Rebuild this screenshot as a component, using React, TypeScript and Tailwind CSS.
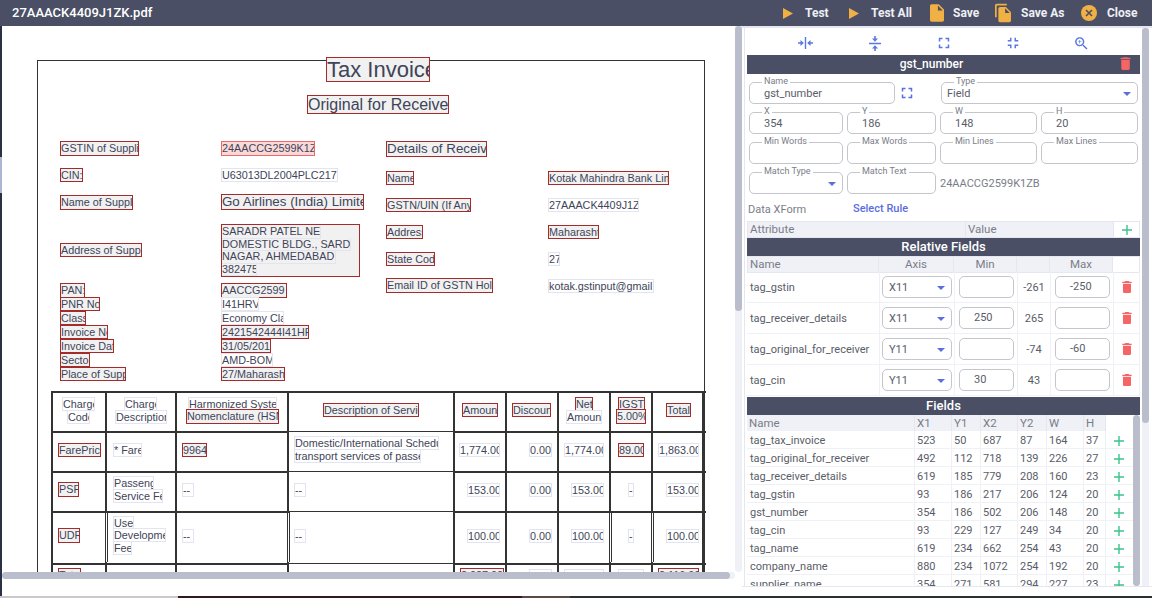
import type { ReactNode } from "react";

type Tag = {
  x: number;
  y: number;
  w: number;
  h: number;
  text: string;
  size?: number;
  kind?: "tag" | "plain" | "hit";
  center?: boolean;
};

const tags: Tag[] = [
  { x: 326, y: 57, w: 104, h: 25, text: "Tax Invoice", size: 22 },
  { x: 307, y: 95, w: 142, h: 19, text: "Original for Receiver", size: 16 },
  { x: 60, y: 141, w: 79, h: 15, text: "GSTIN of Supplier" },
  { x: 221, y: 141, w: 94, h: 15, text: "24AACCG2599K1ZB", kind: "hit" },
  { x: 60, y: 168, w: 23, h: 14, text: "CIN:" },
  { x: 221, y: 168, w: 117, h: 14, text: "U63013DL2004PLC217", kind: "plain" },
  { x: 60, y: 195, w: 73, h: 15, text: "Name of Supplier" },
  { x: 221, y: 194, w: 143, h: 16, text: "Go Airlines (India) Limited", size: 13.33 },
  { x: 60, y: 243, w: 82, h: 14, text: "Address of Supplier" },
  { x: 60, y: 283, w: 25, h: 15, text: "PAN:" },
  { x: 221, y: 283, w: 66, h: 15, text: "AACCG2599" },
  { x: 60, y: 297, w: 40, h: 14, text: "PNR No" },
  { x: 221, y: 297, w: 38, h: 14, text: "I41HRV", kind: "plain" },
  { x: 60, y: 311, w: 26, h: 14, text: "Class" },
  { x: 221, y: 311, w: 63, h: 14, text: "Economy Class", kind: "plain" },
  { x: 60, y: 325, w: 48, h: 14, text: "Invoice No" },
  { x: 221, y: 325, w: 88, h: 14, text: "2421542444I41HRV" },
  { x: 60, y: 339, w: 54, h: 14, text: "Invoice Date" },
  { x: 221, y: 339, w: 50, h: 14, text: "31/05/2019" },
  { x: 60, y: 353, w: 30, h: 14, text: "Sector" },
  { x: 221, y: 353, w: 52, h: 14, text: "AMD-BOM", kind: "plain" },
  { x: 60, y: 367, w: 66, h: 14, text: "Place of Supply" },
  { x: 221, y: 367, w: 64, h: 14, text: "27/Maharashtra" },
  { x: 386, y: 141, w: 101, h: 16, text: "Details of Receiver", size: 13.33 },
  { x: 386, y: 171, w: 28, h: 14, text: "Name" },
  { x: 386, y: 198, w: 85, h: 14, text: "GSTN/UIN (If Any)" },
  { x: 386, y: 225, w: 37, h: 14, text: "Address" },
  { x: 386, y: 252, w: 49, h: 14, text: "State Code" },
  { x: 386, y: 278, w: 107, h: 15, text: "Email ID of GSTN Holder" },
  { x: 548, y: 171, w: 121, h: 14, text: "Kotak Mahindra Bank Limited" },
  { x: 548, y: 198, w: 91, h: 14, text: "27AAACK4409J1ZK", kind: "plain" },
  { x: 548, y: 225, w: 51, h: 14, text: "Maharashtra" },
  { x: 548, y: 252, w: 12, h: 14, text: "27", kind: "plain" },
  { x: 548, y: 279, w: 106, h: 14, text: "kotak.gstinput@gmail.com", kind: "plain" },
  { x: 62, y: 397, w: 33, h: 14, text: "Charge", kind: "plain", center: true },
  { x: 67, y: 410, w: 23, h: 14, text: "Code", kind: "plain", center: true },
  { x: 124, y: 397, w: 33, h: 14, text: "Charge", kind: "plain", center: true },
  { x: 115, y: 410, w: 52, h: 14, text: "Description", kind: "plain", center: true },
  { x: 188, y: 397, w: 89, h: 14, text: "Harmonized System", kind: "plain", center: true },
  { x: 186, y: 409, w: 93, h: 15, text: "Nomenclature (HSN)" },
  { x: 323, y: 403, w: 96, h: 14, text: "Description of Service" },
  { x: 462, y: 403, w: 36, h: 14, text: "Amount" },
  { x: 512, y: 403, w: 39, h: 14, text: "Discount" },
  { x: 575, y: 397, w: 18, h: 14, text: "Net" },
  { x: 566, y: 410, w: 36, h: 14, text: "Amount", kind: "plain" },
  { x: 618, y: 397, w: 27, h: 14, text: "IGST" },
  { x: 616, y: 409, w: 30, h: 15, text: "5.00%" },
  { x: 666, y: 403, w: 25, h: 14, text: "Total" },
  { x: 58, y: 443, w: 43, h: 14, text: "FarePrice" },
  { x: 113, y: 443, w: 29, h: 14, text: "* Fare", kind: "plain" },
  { x: 182, y: 443, w: 25, h: 14, text: "9964" },
  { x: 294, y: 436, w: 145, h: 14, text: "Domestic/International Scheduled", kind: "plain" },
  { x: 294, y: 449, w: 127, h: 14, text: "transport services of passengers", kind: "plain" },
  { x: 459, y: 443, w: 41, h: 14, text: "1,774.00", kind: "plain" },
  { x: 529, y: 443, w: 23, h: 14, text: "0.00", kind: "plain" },
  { x: 564, y: 443, w: 40, h: 14, text: "1,774.00", kind: "plain" },
  { x: 618, y: 443, w: 26, h: 14, text: "89.00" },
  { x: 658, y: 443, w: 41, h: 14, text: "1,863.00", kind: "plain" },
  { x: 58, y: 482, w: 21, h: 15, text: "PSF" },
  { x: 113, y: 476, w: 41, h: 14, text: "Passenger", kind: "plain" },
  { x: 113, y: 489, w: 50, h: 14, text: "Service Fee", kind: "plain" },
  { x: 182, y: 483, w: 12, h: 14, text: "--", kind: "plain" },
  { x: 294, y: 483, w: 12, h: 14, text: "--", kind: "plain" },
  { x: 467, y: 483, w: 33, h: 14, text: "153.00", kind: "plain" },
  { x: 529, y: 483, w: 23, h: 14, text: "0.00", kind: "plain" },
  { x: 571, y: 483, w: 33, h: 14, text: "153.00", kind: "plain" },
  { x: 628, y: 483, w: 6, h: 14, text: "-", kind: "plain" },
  { x: 666, y: 483, w: 33, h: 14, text: "153.00", kind: "plain" },
  { x: 58, y: 528, w: 22, h: 15, text: "UDF" },
  { x: 113, y: 516, w: 21, h: 14, text: "Use", kind: "plain" },
  { x: 113, y: 528, w: 53, h: 14, text: "Development", kind: "plain" },
  { x: 113, y: 541, w: 19, h: 14, text: "Fee", kind: "plain" },
  { x: 182, y: 529, w: 12, h: 14, text: "--", kind: "plain" },
  { x: 294, y: 529, w: 12, h: 14, text: "--", kind: "plain" },
  { x: 467, y: 529, w: 33, h: 14, text: "100.00", kind: "plain" },
  { x: 529, y: 529, w: 23, h: 14, text: "0.00", kind: "plain" },
  { x: 571, y: 529, w: 33, h: 14, text: "100.00", kind: "plain" },
  { x: 628, y: 529, w: 6, h: 14, text: "-", kind: "plain" },
  { x: 666, y: 529, w: 33, h: 14, text: "100.00", kind: "plain" },
  { x: 58, y: 568, w: 23, h: 15, text: "Total" },
  { x: 460, y: 568, w: 44, h: 15, text: "2,027.00" },
  { x: 529, y: 569, w: 23, h: 14, text: "0.00", kind: "plain" },
  { x: 564, y: 569, w: 40, h: 14, text: "2,027.00", kind: "plain" },
  { x: 618, y: 569, w: 26, h: 14, text: "89.00", kind: "plain" },
  { x: 658, y: 568, w: 41, h: 15, text: "2,116.00" },
];

const addressLines = [
  { w: 99, text: "SARADR PATEL NEW" },
  { w: 129, text: "DOMESTIC BLDG., SARDAR" },
  { w: 114, text: "NAGAR, AHMEDABAD" },
  { w: 35, text: "382475" },
];

const vLines = [
  { x: 51, split: false },
  { x: 105, split: true },
  { x: 175, split: false },
  { x: 287, split: true },
  { x: 453, split: false },
  { x: 505, split: false },
  { x: 557, split: false },
  { x: 609, split: true },
  { x: 651, split: true },
  { x: 702, split: false },
];
const hLines = [430, 470, 510, 562];

const relativeRows = [
  { name: "tag_gstin", axis: "X11", min: "", calc: "-261", max: "-250" },
  { name: "tag_receiver_details", axis: "X11", min: "250", calc: "265", max: "" },
  { name: "tag_original_for_receiver", axis: "Y11", min: "", calc: "-74", max: "-60" },
  { name: "tag_cin", axis: "Y11", min: "30", calc: "43", max: "" },
];

const fieldRows = [
  ["tag_tax_invoice", "523", "50", "687", "87", "164", "37"],
  ["tag_original_for_receiver", "492", "112", "718", "139", "226", "27"],
  ["tag_receiver_details", "619", "185", "779", "208", "160", "23"],
  ["tag_gstin", "93", "186", "217", "206", "124", "20"],
  ["gst_number", "354", "186", "502", "206", "148", "20"],
  ["tag_cin", "93", "229", "127", "249", "34", "20"],
  ["tag_name", "619", "234", "662", "254", "43", "20"],
  ["company_name", "880", "234", "1072", "254", "192", "20"],
  ["supplier_name", "354", "271", "581", "294", "227", "23"],
];

function Icon({ d, className, viewBox }: { d: string; className: string; viewBox?: string }) {
  return (
    <svg viewBox={viewBox ?? "0 0 24 24"} fill="currentColor" className={className}>
      <path d={d} />
    </svg>
  );
}

const TRASH = "M6 19c0 1.1.9 2 2 2h8c1.100 0 2-.9 2-2V7H6v12zM19 4h-3.500l-1-1h-5l-1 1H5v2h14V4z";
const EXPAND = "M7 14H5v5h5v-2H7v-3zm-2-4h2V7h3V5H5v5zm12 7h-3v2h5v-5h-2v3zM14 5v2h3v3h2V5h-5z";
const SHRINK = "M5 16h3v3h2v-5H5v2zm3-8H5v2h5V5H8v3zm6 11h2v-3h3v-2h-5v5zm2-11V5h-2v5h5V8h-3z";
const ZOOM =
  "M15.500 14h-.79l-.28-.27C15.410 12.590 16 11.110 16 9.500 16 5.910 13.090 3 9.500 3S3 5.910 3 9.500 5.910 16 9.500 16c1.610 0 3.090-.59 4.230-1.570l.27.28v.79l5 4.990L20.490 19l-4.990-5zm-6 0C7.010 14 5 11.990 5 9.500S7.010 5 9.500 5 14 7.010 14 9.500 11.990 14 9.500 14zM12 10h-2v2H9v-2H7V9h2V7h1v2h2v1z";
const FILE = "M6 2c-1.100 0-1.990.9-1.990 2L4 20c0 1.100.89 2 1.990 2H18c1.100 0 2-.9 2-2V8l-6-6H6zm7 7V3.500L18.500 9H13z";
const COPY =
  "M16 1H4c-1.100 0-2 .9-2 2v14h2V3h12V1zm-1 4l6 6v10c0 1.100-.9 2-2 2H7.990C6.890 23 6 22.100 6 21l.01-14c0-1.100.89-2 1.990-2h7zm-1 7h5.500L14 6.500V12z";

function PlayIcon() {
  return (
    <svg viewBox="0 0 10 11" className="h-[11px] w-[10px] text-[#f0b044]" fill="currentColor">
      <path d="M0 0l10 5.500L0 11z" />
    </svg>
  );
}

function HeaderButton({ icon, label, className }: { icon: ReactNode; label: string; className: string }) {
  return (
    <div className={`flex items-center ${className}`}>
      {icon}
      <span className="text-[12px] font-bold text-[#eef0f5]">{label}</span>
    </div>
  );
}

function Header() {
  return (
    <div className="flex h-[26px] items-center bg-[#4a4f65] pl-3">
      <span className="flex-1 text-[13px] font-medium text-white">27AAACK4409J1ZK.pdf</span>
      <HeaderButton className="w-[66px] gap-[12px]" icon={<PlayIcon />} label="Test" />
      <HeaderButton className="w-[81px] gap-[12px]" icon={<PlayIcon />} label="Test All" />
      <HeaderButton
        className="w-[65px] gap-[9px]"
        icon={<Icon d={FILE} viewBox="4 2 16 20" className="h-[18px] w-[14px] text-[#f0b044]" />}
        label="Save"
      />
      <HeaderButton
        className="w-[86px] gap-[10px]"
        icon={<Icon d={COPY} viewBox="2 1 19 22" className="h-[20px] w-[16px] text-[#f0b044]" />}
        label="Save As"
      />
      <HeaderButton
        className="w-[71px] gap-[10px]"
        icon={
          <svg viewBox="0 0 16 16" className="h-[16px] w-[16px]">
            <circle cx="8" cy="8" r="8" fill="#f0b044" />
            <path d="M5 5l6 6m0-6l-6 6" stroke="#4a4f65" strokeWidth="1.600" />
          </svg>
        }
        label="Close"
      />
    </div>
  );
}

function TagBox({ tag }: { tag: Tag }) {
  const kind = tag.kind ?? "tag";
  const skin =
    kind === "tag"
      ? "border-[#a52a2a] bg-[#f1f1f1]"
      : kind === "hit"
        ? "border-[#ee6a6a] bg-[#fbd9d9]"
        : "border-[#e2e5f0] bg-white";
  return (
    <div
      className={`absolute overflow-hidden whitespace-nowrap border-[1px] text-[#404458] ${skin} ${
        tag.center ? "text-center" : ""
      }`}
      style={{
        left: tag.x - 2,
        top: tag.y - 26,
        width: tag.w,
        height: tag.h,
        fontSize: tag.size ?? 10.8,
        lineHeight: `${tag.h - 2}px`,
      }}
    >
      {tag.text}
    </div>
  );
}

function InvoiceRules() {
  return (
    <>
      {vLines.map((line) => (
        <div
          key={line.x}
          className="absolute top-[365px] h-[190px] w-[2px] bg-[#333333]"
          style={{ left: line.x - 2 }}
        >
          {/* the UDF row draws these rules twice, leaving a hairline between them */}
          {line.split && (
            <div className="absolute left-0 top-[121px] h-[50px] w-[3px] border-x border-[#333333] bg-white" />
          )}
        </div>
      ))}
      <div className="absolute left-[49px] top-[365px] h-[2px] w-[655px] bg-[#333333]" />
      {hLines.map((y) => (
        <div key={y}>
          <div className="absolute left-[49px] h-[2px] w-[238px] bg-[#333333]" style={{ top: y - 26 + 1 }} />
          <div className="absolute left-[287px] h-px w-[165px] bg-[#333333]" style={{ top: y - 25 }} />
          <div className="absolute left-[451px] h-[2px] w-[253px] bg-[#333333]" style={{ top: y - 26 + 1 }} />
        </div>
      ))}
    </>
  );
}

function PdfPane() {
  return (
    <div className="relative h-[546px] w-[733px] overflow-hidden bg-white font-['Liberation_Sans',sans-serif]">
      <div className="absolute left-[35px] top-[34px] h-[600px] w-[668px] border border-[#333333]" />
      <InvoiceRules />
      {tags.map((tag) => (
        <TagBox key={`${tag.x}-${tag.y}`} tag={tag} />
      ))}
      {/* supplier address block */}
      <div className="absolute left-[219px] top-[198px] h-[53px] w-[139px] border border-[#a52a2a] bg-[#f1f1f1] pt-px text-[10.800px] leading-[11.500px] text-[#404458]">
        {addressLines.map((line) => (
          <div
            key={line.text}
            className="overflow-hidden whitespace-nowrap border-b border-r border-[#e2e5f0]"
            style={{ width: line.w }}
          >
            {line.text}
          </div>
        ))}
      </div>
    </div>
  );
}

function Caret() {
  return (
    <span className="absolute right-[6px] top-[9px] h-0 w-0 border-x-[4px] border-t-[4px] border-x-transparent border-t-[#5a6ee0]" />
  );
}

function Field({
  label,
  value,
  className,
  select,
}: {
  label: string;
  value?: string;
  className: string;
  select?: boolean;
}) {
  return (
    <div className={`relative h-[22px] shrink-0 rounded-[5px] border border-[#c4c6cc] ${className}`}>
      <span className="absolute left-[12px] top-[-7px] bg-white px-[2px] text-[9px] leading-[10px] text-[#7a7d88]">
        {label}
      </span>
      {value && (
        <span className={`block text-[11px] leading-[21px] text-[#5a5d68] ${select ? "pl-[5px]" : "pl-[14px]"}`}>
          {value}
        </span>
      )}
      {select && <Caret />}
    </div>
  );
}

function SectionBar({ title, size, trash }: { title: string; size: string; trash?: boolean }) {
  return (
    <div
      className={`relative flex items-center justify-center bg-[#4a4f65] font-medium text-white ${size} ${
        trash ? "h-[19px] pb-[2px] pr-[24px]" : "h-[18px]"
      }`}
    >
      {title}
      {trash && <Icon d={TRASH} className="absolute right-[6px] h-[17px] w-[17px] text-[#f56565]" />}
    </div>
  );
}

function Plus() {
  return (
    <svg viewBox="0 0 10 10" className="h-[10px] w-[10px] text-[#3bc48a]">
      <path d="M0 5h10M5 0v10" stroke="currentColor" strokeWidth="1.400" />
    </svg>
  );
}

function Toolbar() {
  return (
    <div className="mx-auto grid h-[27px] w-[345px] grid-cols-5 items-center justify-items-center pt-[3px] text-[#5a78e0]">
      <svg viewBox="0 0 15 12" className="h-[12px] w-[15px]" fill="currentColor">
        <path d="M6.800 0h1.400v12H6.800zM0 5.200h2.500V3L5.800 6 2.500 9V6.800H0zM15 5.200h-2.500V3L9.200 6l3.300 3V6.800H15z" />
      </svg>
      <svg viewBox="0 0 12 15" className="h-[15px] w-[12px]" fill="currentColor">
        <path d="M0 6.800h12v1.400H0zM5.200 0v2.500H3L6 5.800l3-3.300H6.800V0zM5.200 15v-2.500H3L6 9.200l3 3.300H6.800V15z" />
      </svg>
      <Icon d={EXPAND} className="h-[18px] w-[18px]" />
      <Icon d={SHRINK} className="h-[18px] w-[18px]" />
      <Icon d={ZOOM} className="h-[17px] w-[17px]" />
    </div>
  );
}

function FormBlock() {
  return (
    <div className="flex flex-col pt-[8px]">
      <div className="flex items-center pl-[2px]">
        <Field label="Name" value="gst_number" className="w-[146px]" />
        <Icon d={EXPAND} className="ml-[3px] h-[18px] w-[18px] text-[#5a6ee0]" />
        <Field label="Type" value="Field" select className="ml-[25px] w-[197px]" />
      </div>
      <div className="mt-[8px] flex pl-[2px]">
        <Field label="X" value="354" className="w-[94px]" />
        <Field label="Y" value="186" className="ml-[4px] w-[89px]" />
        <Field label="W" value="148" className="ml-[4px] w-[97px]" />
        <Field label="H" value="20" className="ml-[4px] w-[97px]" />
      </div>
      <div className="mt-[8px] flex pl-[2px]">
        <Field label="Min Words" className="w-[94px]" />
        <Field label="Max Words" className="ml-[4px] w-[89px]" />
        <Field label="Min Lines" className="ml-[4px] w-[97px]" />
        <Field label="Max Lines" className="ml-[4px] w-[97px]" />
      </div>
      <div className="mt-[8px] flex items-center pl-[2px]">
        <Field label="Match Type" select className="w-[94px]" />
        <Field label="Match Text" className="ml-[4px] w-[89px]" />
        <span className="ml-[4px] mt-[3px] text-[11px] text-[#7a7d88]">24AACCG2599K1ZB</span>
      </div>
      <div className="mt-[6px] flex h-[17px] items-center pl-[1px] text-[11px]">
        <span className="w-[105px] pt-[3px] text-[#7a7d88]">Data XForm</span>
        <span className="pt-px font-medium text-[#5a6ee0]">Select Rule</span>
      </div>
    </div>
  );
}

function RelativeFields() {
  const cols = "grid-cols-[132px_75px_63px_33px_63px_27px]";
  return (
    <div className="text-[11px] text-[#5a5d68]">
      <div className={`grid h-[16px] ${cols} bg-white text-[11.500px] leading-[15px] text-[#7a7d88]`}>
        <div className="border border-[#e4e7f0] bg-[#eff1f6] pl-[2px]">Name</div>
        <div className="border-y border-r border-[#e4e7f0] bg-[#eff1f6] text-center">Axis</div>
        <div className="border-y border-r border-[#e4e7f0] bg-[#eff1f6] text-center">Min</div>
        <div className="border-y border-r border-[#e4e7f0] bg-[#eff1f6]" />
        <div className="border-y border-r border-[#e4e7f0] bg-[#eff1f6] text-center">Max</div>
        <div className="border-y border-r border-[#e4e7f0]" />
      </div>
      {relativeRows.map((row) => (
        <div key={row.name} className={`grid h-[31px] ${cols} items-center border-b border-[#eff1f6]`}>
          <div className="flex h-full items-center pl-[3px] pt-[2px]">{row.name}</div>
          <div className="flex h-full items-center border-l border-[#eff1f6] pl-[2px]">
            <div className="relative h-[22px] w-[70px] rounded-[5px] border border-[#c4c6cc] pl-[6px] leading-[22px]">
              {row.axis}
              <Caret />
            </div>
          </div>
          <div className="flex h-full items-center border-l border-[#eff1f6] pl-[4px]">
            <div className="h-[22px] w-[55px] rounded-[5px] border border-[#c4c6cc] pl-[14px] leading-[20px]">
              {row.min}
            </div>
          </div>
          <div className="flex h-full items-center justify-center border-l border-[#eff1f6] pt-[2px]">{row.calc}</div>
          <div className="flex h-full items-center border-l border-[#eff1f6] pl-[4px]">
            <div className="h-[22px] w-[55px] rounded-[5px] border border-[#c4c6cc] pl-[14px] leading-[20px]">
              {row.max}
            </div>
          </div>
          <div className="flex h-full items-center justify-center border-x border-[#eff1f6]">
            <Icon d={TRASH} className="h-[16px] w-[16px] text-[#f56565]" />
          </div>
        </div>
      ))}
    </div>
  );
}

function FieldsTable() {
  const cols = "grid-cols-[168px_37px_29px_37px_29px_37px_22px_26px]";
  const heads = ["Name", "X1", "Y1", "X2", "Y2", "W", "H"];
  return (
    <div className="relative h-[171px] overflow-hidden text-[11px] text-[#5a5d68]">
      <div className={`grid h-[16px] ${cols} text-[11.500px] leading-[16px] text-[#7a7d88]`}>
        {heads.map((h) => (
          <div key={h} className="border-r border-[#e4e7f0] bg-[#eff1f6] pl-[2px]">
            {h}
          </div>
        ))}
      </div>
      {fieldRows.map((row) => (
        <div key={row[0]} className={`grid h-[18px] ${cols} border-b border-[#eff1f6] leading-[19px]`}>
          {row.map((cell, i) => (
            <div key={i} className={`border-r border-[#eff1f6] ${i === 0 ? "pl-[3px]" : "pl-[2px]"}`}>
              {cell}
            </div>
          ))}
          <div className="flex items-center justify-center">
            <Plus />
          </div>
        </div>
      ))}
      {/* table scrollbar */}
      <div className="absolute right-0 top-0 h-full w-[7px] rounded-full bg-[#b9bdcc]" />
    </div>
  );
}

function SidePanel() {
  return (
    <div className="flex h-[561px] w-[410px] border-b border-t-2 border-[#e4e7f0] bg-white font-['Roboto',sans-serif]">
      <div className="ml-[2px] w-[397px] border-l border-[#e4e7f0] pl-[2px] pr-px">
        <Toolbar />
        <SectionBar title="gst_number" size="text-[12px]" trash />
        <FormBlock />
        <div className="mt-[4px] grid h-[17px] grid-cols-[219px_148px_26px] text-[11.500px] leading-[15px] text-[#7a7d88]">
          <div className="border border-[#e4e7f0] bg-[#eff1f6] pl-[2px]">Attribute</div>
          <div className="border-y border-r border-[#e4e7f0] bg-[#eff1f6] pl-[2px]">Value</div>
          <div className="flex items-center justify-center border-y border-r border-[#e4e7f0]">
            <Plus />
          </div>
        </div>
        <SectionBar title="Relative Fields" size="text-[13px]" />
        <RelativeFields />
        <div className="h-px" />
        <SectionBar title="Fields" size="text-[13px]" />
        <FieldsTable />
      </div>
      <div className="ml-px h-full w-[7px] bg-[#eff1f6]">
        <div className="h-[395px] rounded-full bg-[#b9bdcc]" />
      </div>
    </div>
  );
}

export default function App() {
  return (
    <div className="flex h-[598px] w-[1152px] flex-col overflow-hidden bg-white font-['Roboto',sans-serif]">
      <Header />
      <div className="flex flex-1">
        {/* sliver of the window behind */}
        <div className="flex w-[2px] flex-col bg-[#2b3044]">
          <div className="h-[131px]" />
          <div className="h-[36px] bg-[#aeb4d4]" />
        </div>
        <div className="flex w-[740px] flex-col">
          <div className="flex">
            <PdfPane />
            <div className="h-[546px] w-[7px] rounded-b-full bg-[#eff1f6]">
              <div className="h-[285px] rounded-full bg-[#b9bdcc]" />
            </div>
          </div>
          <div className="h-[7px] w-[733px] rounded-full bg-[#eff1f6]">
            <div className="h-full w-[728px] rounded-full bg-[#b9bdcc]" />
          </div>
        </div>
        <SidePanel />
      </div>
      {/* desktop wallpaper peeking out below the window */}
      <div className="flex h-[2px]">
        <div className="w-[178px] bg-[#c9c9c9]" />
        <div className="w-[344px] bg-[#2e1a1a]" />
        <div className="w-[48px] bg-[#5a4a42]" />
        <div className="flex-1 bg-[#2a2f2f]" />
      </div>
    </div>
  );
}
